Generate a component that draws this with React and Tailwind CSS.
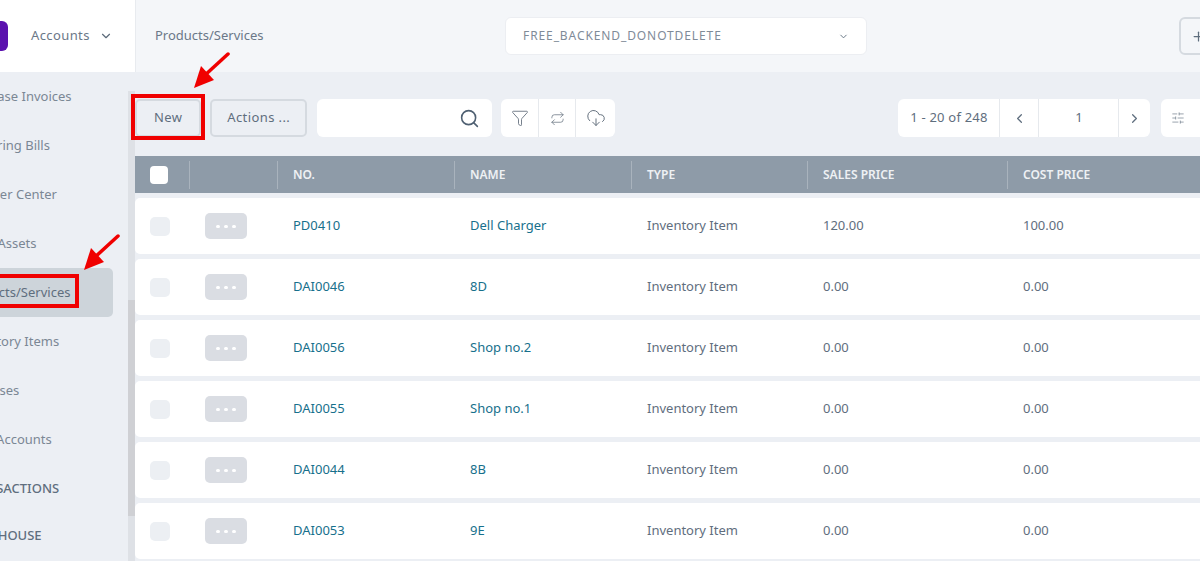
import React from "react";
import { ChevronDown, ChevronLeft, ChevronRight, Search, Filter, Repeat, DownloadCloud, SlidersHorizontal, Plus } from "lucide-react";

const font = { };
const cols = "grid grid-cols-[55px_88px_177px_177px_176px_200px_200px]";

const side = [
  { t: "Purchase Invoices", c: "h-[49px]" },
  { t: "Recurring Bills", c: "h-[49px]" },
  { t: "Supplier Center", c: "h-[49px]" },
  { t: "Fixed Assets", c: "h-[49px]" },
  { t: "Products/Services", c: "h-[49px]", active: true },
  { t: "Inventory Items", c: "h-[49px]" },
  { t: "Expenses", c: "h-[49px]" },
  { t: "Bank Accounts", c: "h-[49px]" },
];

const rows = [
  ["PD0410", "Dell Charger", "Inventory Item", "120.00", "100.00"],
  ["DAI0046", "8D", "Inventory Item", "0.00", "0.00"],
  ["DAI0056", "Shop no.2", "Inventory Item", "0.00", "0.00"],
  ["DAI0055", "Shop no.1", "Inventory Item", "0.00", "0.00"],
  ["DAI0044", "8B", "Inventory Item", "0.00", "0.00"],
  ["DAI0053", "9E", "Inventory Item", "0.00", "0.00"],
];

function Arrow({ className }) {
  return (
    <svg className={className} width="40" height="40" viewBox="0 0 40 40" fill="none">
      <path d="M36 2 L12 24" stroke="#f00000" strokeWidth="3.5" strokeLinecap="round" />
      <path d="M2 36 L9 14 L22 28 Z" fill="#f00000" />
    </svg>
  );
}

export default function App() {
  return (
    <div className="relative w-[1200px] h-[561px] overflow-hidden bg-[#eceff4] font-['Inter','Liberation_Sans',sans-serif] text-[13px] text-[#5f6e7e]">
      <header className="flex h-[72px] bg-[#f4f6f9]">
        <div className="flex w-[136px] shrink-0 items-center border-r border-[#e8ebef] bg-white">
          <div className="h-[30px] w-[8px] rounded-r-[6px] bg-[#5b12ae]" />
          <span className="ml-[23px] text-[13px] tracking-[0.4px] text-[#6b7888]">Accounts</span>
          <ChevronDown className="ml-[9px] h-[14px] w-[14px] text-[#5c6a7a]" strokeWidth={2} />
        </div>
        <div className="flex flex-1 items-center">
          <span className="ml-[19px] w-[350px] text-[#6b7888]">Products/Services</span>
          <div className="flex h-[38px] w-[362px] items-center justify-between rounded-[6px] border border-[#eceef2] bg-white px-[17px] text-[12px] tracking-[0.9px] text-[#7f8b98]">
            <span>FREE_BACKEND_DONOTDELETE</span>
            <ChevronDown className="h-[11px] w-[11px] text-[#5f6e7e]" />
          </div>
          <div className="ml-[312px] flex h-[38px] w-[60px] shrink-0 items-center rounded-[6px] border-2 border-[#d5dae0] pl-[10px]">
            <Plus className="h-[15px] w-[15px] text-[#5f6e7e]" />
          </div>
        </div>
      </header>

      <div className="flex h-[489px]">
        <aside className="relative w-[135px] shrink-0 overflow-hidden">
          <div className="absolute right-0 top-[19px] bottom-0 w-[7px] bg-[#dee1e6]">
            <div className="mt-[209px] h-[216px] w-full bg-[#cfd0d4]" />
          </div>
          <nav className="ml-[-38px] w-[151px] pt-[-3px] text-[#7b8794]">
            {side.map((s) => (
              <div key={s.t} className={`flex ${s.c} items-center rounded-[5px] pl-[0px] ${s.active ? "bg-[#cdd4da] text-[#5f6e7e]" : ""} -mt-[0px] whitespace-nowrap`}>
                {s.t}
              </div>
            ))}
            <div className="flex h-[49px] items-center whitespace-nowrap text-[#5f6e7e] font-medium">TRANSACTIONS</div>
            <div className="flex h-[45px] items-center whitespace-nowrap text-[#5f6e7e] font-medium">WAREHOUSE</div>
          </nav>
        </aside>

        <main className="min-w-0 flex-1">
          <div className="flex h-[84px] items-start pt-[27px]">
            <button className="flex h-[38px] w-[68px] items-center justify-center rounded-[5px] border-2 border-[#d5dae0] tracking-[0.4px]">New</button>
            <button className="ml-[9px] flex h-[38px] w-[100px] items-center justify-center rounded-[5px] border-2 border-[#d5dae0] tracking-[0.4px]">Actions ...</button>
            <div className="ml-[10px] flex h-[38px] w-[180px] items-center justify-end rounded-[6px] bg-white pr-[12px]">
              <Search className="h-[21px] w-[21px] text-[#4f6072]" strokeWidth={1.8} />
            </div>
            <div className="ml-[9px] flex h-[38px] w-[114px] rounded-[6px] bg-white text-[#66727f]">
              <div className="flex w-[38px] items-center justify-center border-r border-[#e6e9ed]"><Filter className="h-[18px] w-[18px]" strokeWidth={1.2} /></div>
              <div className="flex w-[37px] items-center justify-center border-r border-[#e6e9ed]"><Repeat className="h-[15px] w-[15px]" strokeWidth={1.2} /></div>
              <div className="flex w-[39px] items-center justify-center"><DownloadCloud className="h-[20px] w-[20px]" strokeWidth={1.2} /></div>
            </div>
            <div className="ml-[283px] flex h-[38px] w-[259px] rounded-[6px] bg-white">
              <div className="flex w-[102px] items-center justify-center border-r border-[#e6e9ed] tracking-[0.2px]">1 - 20 of 248</div>
              <div className="flex w-[39px] items-center justify-center border-r border-[#e6e9ed]"><ChevronLeft className="h-[15px] w-[15px]" /></div>
              <div className="flex w-[80px] items-center justify-center border-r border-[#e6e9ed]">1</div>
              <div className="flex flex-1 items-center justify-center"><ChevronRight className="h-[15px] w-[15px]" /></div>
            </div>
            <div className="ml-[11px] flex h-[38px] w-[40px] items-center rounded-l-[6px] bg-white pl-[10px]">
              <SlidersHorizontal className="h-[14px] w-[14px] text-[#7b8794]" strokeWidth={1.3} />
            </div>
          </div>

          <div className={`${cols} h-[37px] w-[1073px] items-center bg-[#8e9ba8] text-[12px] font-semibold text-[#eef1f4]`}>
            <div className="flex h-[28px] items-center justify-center border-r border-[#a9b3bd] pl-[8px] pr-[14px]">
              <div className="h-[18px] w-[18px] rounded-[4px] bg-white" />
            </div>
            <div className="h-[28px] border-r border-[#a9b3bd]" />
            {["NO.", "NAME", "TYPE", "SALES PRICE", "COST PRICE"].map((h) => (
              <div key={h} className="flex h-[28px] items-center border-r border-[#a9b3bd] pl-[15px] last:border-0">{h}</div>
            ))}
          </div>

          <div className="mt-[5px] flex flex-col gap-[5px]">
            {rows.map((r) => (
              <div key={r[0]} className={`${cols} h-[56px] w-[1073px] items-center rounded-[5px] bg-white`}>
                <div className="flex justify-center pl-[8px] pr-[14px]">
                  <div className="h-[19px] w-[20px] rounded-[5px] bg-[#eceff3]" />
                </div>
                <div className="pl-[15px]">
                  <div className="flex h-[26px] w-[42px] items-center justify-center gap-[4px] rounded-[5px] bg-[#dadde3]">
                    <i className="h-[3px] w-[4px] rounded-full bg-white" />
                    <i className="h-[3px] w-[4px] rounded-full bg-white" />
                    <i className="h-[3px] w-[4px] rounded-full bg-white" />
                  </div>
                </div>
                <div className="pl-[15px] text-[#17708c]">{r[0]}</div>
                <div className="pl-[15px] text-[#17708c]">{r[1]}</div>
                <div className="pl-[15px]">{r[2]}</div>
                <div className="pl-[15px]">{r[3]}</div>
                <div className="pl-[15px]">{r[4]}</div>
              </div>
            ))}
          </div>
        </main>
      </div>

      <div className="absolute left-[131px] top-[94px] h-[46px] w-[74px] border-[4px] border-[#f00000]" />
      <div className="absolute left-[-6px] top-[274px] h-[34px] w-[85px] border-[4px] border-[#f00000]" />
      <Arrow className="absolute left-[192px] top-[52px]" />
      <Arrow className="absolute left-[82px] top-[234px]" />
    </div>
  );
}
